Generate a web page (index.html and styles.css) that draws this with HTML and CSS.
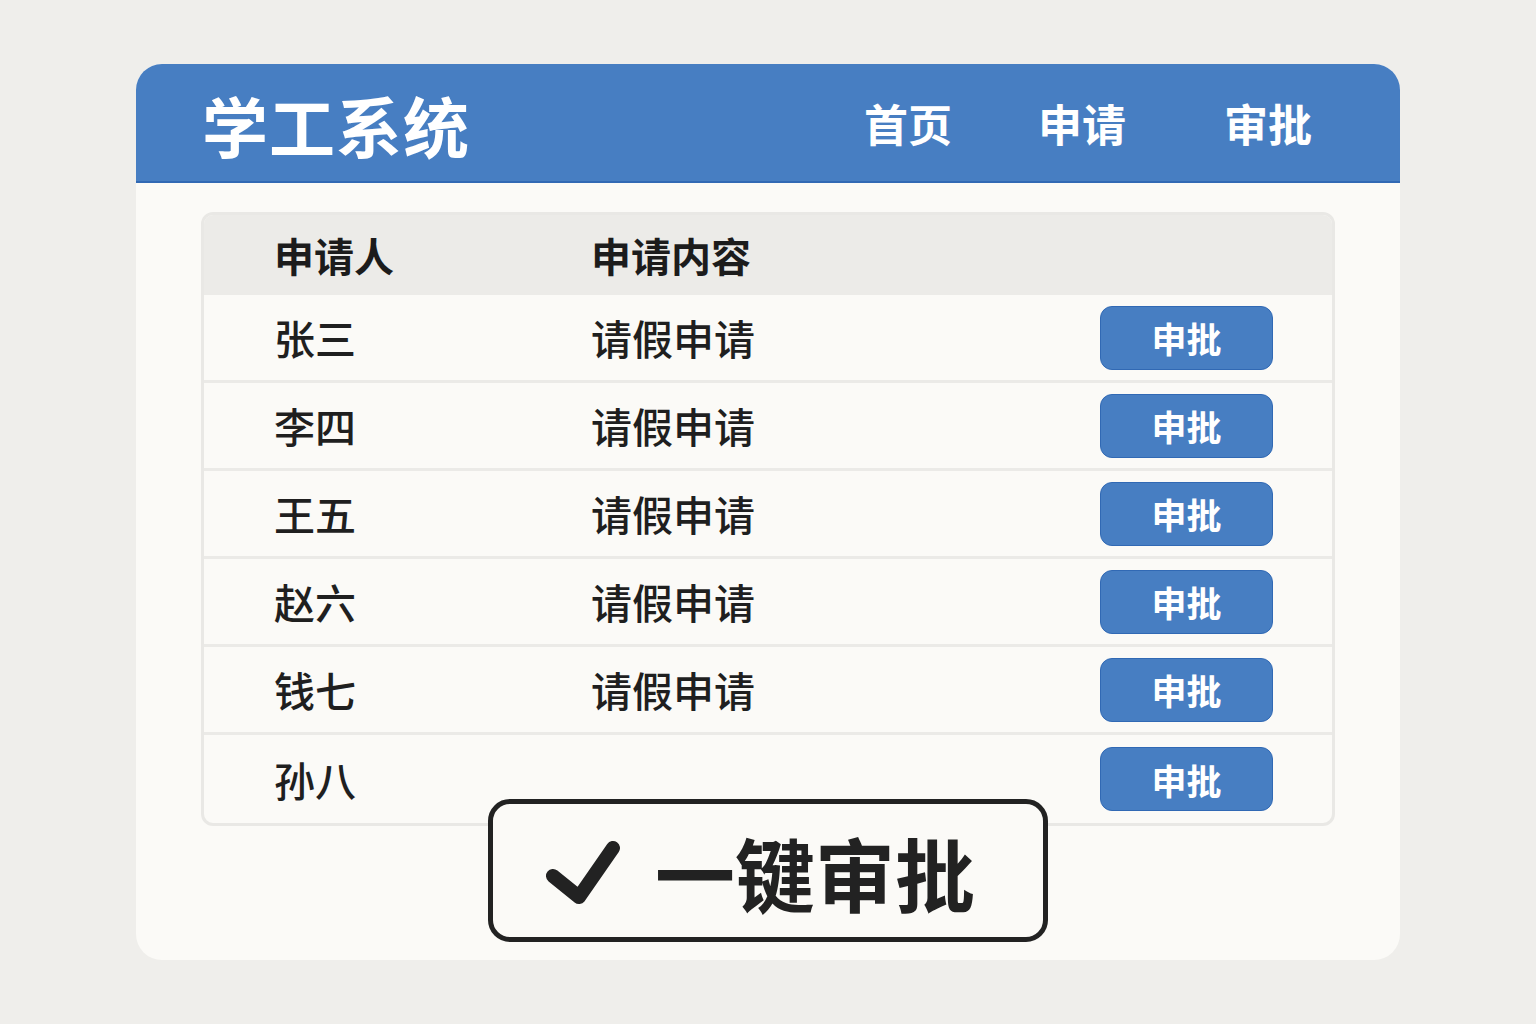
FILE: index.html
```html
<!DOCTYPE html>
<html lang="zh-CN">
<head>
<meta charset="utf-8">
<title>学工系统</title>
<link rel="stylesheet" href="styles.css">
</head>
<body>
<div class="card">
  <header class="topbar">
    <div class="brand">学工系统</div>
    <nav class="nav">
      <span class="nav-item">首页</span>
      <span class="nav-item">申请</span>
      <span class="nav-item nav-last">审批</span>
    </nav>
  </header>
  <main class="content">
    <div class="table">
      <div class="row head">
        <div class="cell">申请人</div>
        <div class="cell">申请内容</div>
        <div class="cell"></div>
      </div>
      <div class="row">
        <div class="cell">张三</div>
        <div class="cell">请假申请</div>
        <div class="cell"><span class="btn">申批</span></div>
      </div>
      <div class="row">
        <div class="cell">李四</div>
        <div class="cell">请假申请</div>
        <div class="cell"><span class="btn">申批</span></div>
      </div>
      <div class="row">
        <div class="cell">王五</div>
        <div class="cell">请假申请</div>
        <div class="cell"><span class="btn">申批</span></div>
      </div>
      <div class="row">
        <div class="cell">赵六</div>
        <div class="cell">请假申请</div>
        <div class="cell"><span class="btn">申批</span></div>
      </div>
      <div class="row">
        <div class="cell">钱七</div>
        <div class="cell">请假申请</div>
        <div class="cell"><span class="btn">申批</span></div>
      </div>
      <div class="row last">
        <div class="cell">孙八</div>
        <div class="cell"></div>
        <div class="cell"><span class="btn">申批</span></div>
      </div>
    </div>
    <div class="bulk">
      <svg class="check" width="76" height="68" viewBox="0 0 76 68">
        <path d="M8 38 L34 59 L68 10" fill="none" stroke="#222" stroke-width="14" stroke-linecap="round" stroke-linejoin="round"/>
      </svg>
      <span class="bulk-text">一键审批</span>
    </div>
  </main>
</div>
</body>
</html>
```

FILE: styles.css
```css
* { box-sizing: border-box; }
html, body { margin: 0; padding: 0; }
body {
  background: #efeeeb;
  font-family: "Noto Sans CJK SC", "Noto Sans", sans-serif;
  color: #1f1f1f;
  width: 1536px;
  height: 1024px;
  overflow: hidden;
}
.card {
  margin: 64px 136px 0;
  width: 1264px;
  background: #fbfaf7;
  border-radius: 26px;
  overflow: hidden;
  padding-bottom: 18px;
}
.topbar {
  height: 119px;
  background: #477ec2;
  border-bottom: 2px solid #3169b4;
  display: flex;
  align-items: center;
  justify-content: space-between;
  padding: 0 88px 0 66px;
}
.brand {
  color: #fff;
  font-size: 66px;
  font-weight: 700;
  letter-spacing: 1px;
  line-height: 1;
  margin-top: 2px;
}
.nav {
  display: flex;
  gap: 86px;
  align-items: center;
}
.nav-item {
  color: #fff;
  font-size: 44px;
  font-weight: 700;
  line-height: 1;
  letter-spacing: 0;
}
.nav-last { margin-left: 12px; }
.content {
  padding: 29px 65px 0;
  display: flex;
  flex-direction: column;
  align-items: center;
}
.table {
  width: 100%;
  border: 3px solid #e9e8e5;
  border-radius: 12px;
  overflow: hidden;
  background: #fbfaf7;
}
.row {
  display: grid;
  grid-template-columns: 317px 1fr auto;
  align-items: center;
  padding: 0 59px 0 70px;
  height: 88px;
  border-bottom: 3px solid #ebeae7;
  font-size: 41px;
  font-weight: 500;
  color: #1f1f1f;
}
.row.last { border-bottom: none; }
.row.head {
  height: 80px;
  background: #ecebe8;
  border-bottom: none;
  font-weight: 700;
  font-size: 40px;
  color: #1c1c1c;
}
.cell { line-height: 1; }
.btn {
  display: flex;
  align-items: center;
  justify-content: center;
  width: 173px;
  height: 64px;
  background: #477ec2;
  border: 1.5px solid #3169b4;
  border-radius: 12px;
  color: #fff;
  font-size: 35px;
  font-weight: 700;
  line-height: 1;
}
.bulk {
  position: relative;
  z-index: 2;
  margin-top: -27px;
  width: 560px;
  height: 143px;
  border: 5px solid #222;
  border-radius: 22px;
  background: #fbfaf7;
  display: flex;
  align-items: center;
  padding-left: 52px;
  gap: 34px;
}
.check { flex: none; margin-top: 2px; }
.bulk-text {
  font-size: 80px;
  font-weight: 700;
  color: #222;
  line-height: 1;
  letter-spacing: 0;
}
```
